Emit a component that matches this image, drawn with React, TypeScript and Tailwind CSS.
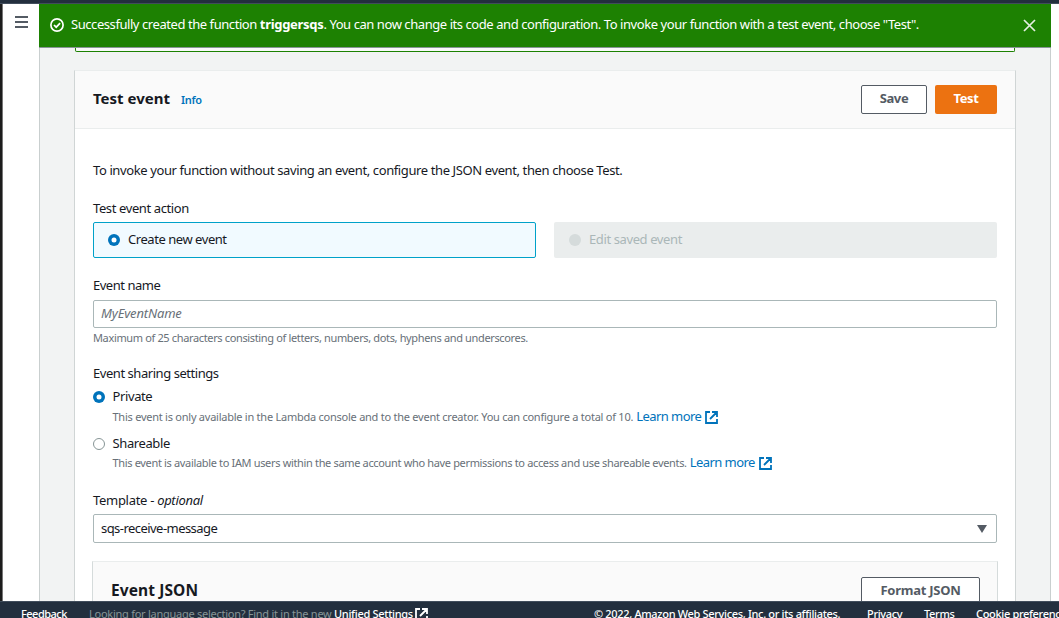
import type { ReactNode } from "react";

function External({ className = "" }: { className?: string }) {
  return (
    <svg viewBox="0 0 13 13" className={`h-[13px] w-[13px] shrink-0 ${className}`} fill="none" stroke="currentColor" strokeWidth="1.8">
      <path d="M5 1H1v11h11V8M7 1h5v5M12 1L5 8" />
    </svg>
  );
}

function Radio({ state }: { state: "on" | "off" | "disabled" }) {
  if (state === "on")
    return (
      <svg viewBox="0 0 12 12" className="h-3 w-3 shrink-0">
        <circle cx="6" cy="6" r="6" fill="#0073bb" />
        <circle cx="6" cy="6" r="2.5" fill="#fff" />
      </svg>
    );
  if (state === "off")
    return <span className="h-3 w-3 shrink-0 rounded-full border border-[#879596] bg-white" />;
  return <span className="h-3 w-3 shrink-0 rounded-full bg-[#d5dbdb]" />;
}

function Label({ children, className = "" }: { children: ReactNode; className?: string }) {
  return <div className={`h-5 leading-5 ${className}`}>{children}</div>;
}

function SharingOption({ name, on, text, track }: { name: string; on: boolean; text: string; track: string }) {
  return (
    <div>
      <div className={`flex h-5 items-center gap-[7.5px] ${on ? "" : "pt-[2px]"}`}>
        <Radio state={on ? "on" : "off"} />
        <span>{name}</span>
      </div>
      <div className="flex h-5 items-center pl-[19.5px] whitespace-nowrap">
        <span className={`text-[11px] text-[#687078] ${track}`}>{text}</span>
        <a className="ml-[3px] flex items-center text-[#0073bb]">
          <span className="tracking-[-0.56px]">Learn more</span>
          <External className="ml-1" />
        </a>
      </div>
    </div>
  );
}

export default function App() {
  return (
    <div className="flex h-[618px] w-[1059px] flex-col overflow-hidden bg-white font-['Noto_Sans',sans-serif] text-[13px] tracking-[-0.39px] whitespace-nowrap text-[#16191f]">
      <div className="h-1 shrink-0 border-b border-[#414d5c] bg-[#232f3e]" />
      <div className="flex h-[597px] shrink-0">
        <div className="w-[3px] shrink-0 border-r border-[#777] bg-[#1c1c1c]" />
        <aside className="flex w-9 shrink-0 justify-center pt-3">
          <svg viewBox="0 0 13 12" className="h-3 w-[13px]" stroke="#545b64" strokeWidth="1.8">
            <path d="M0 1h13M0 6h13M0 11h13" />
          </svg>
        </aside>
        <div className="flex w-[1012px] shrink-0 flex-col">
          <div className="flex h-11 shrink-0 items-center border-b border-[#879596] bg-[#1d8102] pr-[15px] pb-px pl-[11px] text-white">
            <svg viewBox="0 0 14 14" className="h-[14px] w-[14px]" fill="none" stroke="currentColor" strokeWidth="1.7">
              <circle cx="7" cy="7" r="6.1" />
              <path d="M4 7l2.2 2.2L10.1 5.2" />
            </svg>
            <span className="ml-[7px] pb-px tracking-[-0.435px]">
              Successfully created the function <b className="tracking-[-0.3px]">triggersqs</b>. You can now change its code and configuration. To invoke your function with a test event, choose "Test".
            </span>
            <svg viewBox="0 0 13 13" className="ml-auto h-[13px] w-[13px]" stroke="#e5efe2" strokeWidth="1.7">
              <path d="M1 1l11 11M12 1L1 12" />
            </svg>
          </div>
          <main className="h-[553px] overflow-hidden border-x border-[#c9cfcf] bg-[#f2f3f3] pr-[34px] pl-[34px]">
            <div className="ml-px h-1 w-[940px] rounded-b-[2px] border-x border-b border-[#1d8102] bg-[#fafafa]" />
            <section className="mt-[18px] h-[600px] w-[942px] border border-[#d0d5d5] border-t-[#eaeded] bg-white">
              <header className="flex h-[58px] items-center border-b border-[#eaeded] bg-[#fafafa] pr-[18px] pl-[18px]">
                <h2 className="mb-[3px] text-[15px] font-bold tracking-[0px]">Test event</h2>
                <a className="mt-[1px] ml-[11px] text-[11px] font-semibold tracking-[-0.3px] text-[#0073bb]">Info</a>
                <button className="ml-auto h-[29px] w-[66px] rounded-[2px] border border-[#545b64] bg-white pb-px font-bold text-[#545b64]">Save</button>
                <button className="ml-2 h-[29px] w-[62px] rounded-[2px] bg-[#ec7211] pb-px font-bold text-white">Test</button>
              </header>
              <div className="px-[18px] pt-[31px]">
                <Label>To invoke your function without saving an event, configure the JSON event, then choose Test.</Label>
                <Label className="mt-[18px]">Test event action</Label>
                <div className="mt-1 flex gap-[18px]">
                  <div className="flex h-9 w-[443px] items-center gap-2 rounded-[2px] border border-[#00a1c9] bg-[#f1faff] pl-[14px]">
                    <Radio state="on" />
                    <span className="tracking-[-0.45px]">Create new event</span>
                  </div>
                  <div className="flex h-9 w-[443px] items-center gap-2 rounded-[2px] bg-[#eaeded] pl-[15px] text-[#aab7b8]">
                    <Radio state="disabled" />
                    <span>Edit saved event</span>
                  </div>
                </div>
                <Label className="mt-[17px] tracking-[-0.48px]">Event name</Label>
                <input
                  placeholder="MyEventName"
                  className="mt-[5px] block h-7 w-[904px] rounded-[2px] border border-[#aab7b8] px-[7px] pb-[2px] tracking-[-0.17px] placeholder:text-[#687078] placeholder:italic"
                />
                <div className="h-5 text-[11px] leading-5 tracking-[-0.355px] text-[#687078]">
                  Maximum of 25 characters consisting of letters, numbers, dots, hyphens and underscores.
                </div>
                <Label className="mt-[15px] tracking-[-0.45px]">Event sharing settings</Label>
                <div className="mt-1 flex flex-col gap-[6px]">
                  <SharingOption
                    name="Private"
                    on
                    track="tracking-[-0.245px]"
                    text="This event is only available in the Lambda console and to the event creator. You can configure a total of 10."
                  />
                  <SharingOption
                    name="Shareable"
                    on={false}
                    track="tracking-[-0.34px]"
                    text="This event is available to IAM users within the same account who have permissions to access and use shareable events."
                  />
                </div>
                <Label className="mt-[17px] tracking-[-0.3px]">
                  Template - <i>optional</i>
                </Label>
                <div className="mt-1 flex h-[29px] w-[904px] items-center justify-between rounded-[2px] border border-[#aab7b8] pr-[9px] pl-[7px]">
                  <span className="tracking-[-0.55px]">sqs-receive-message</span>
                  <svg viewBox="0 0 10 8" className="h-2 w-[10px]" fill="#545b64">
                    <path d="M0 0h10L5 8z" />
                  </svg>
                </div>
                <div className="mt-[18px] -ml-px flex h-[60px] w-[906px] items-start justify-between border border-[#d5dbdb] border-t-[#eaeded] bg-[#fafafa] pt-[15px] pr-[17px] pl-[18px]">
                  <h3 className="mt-px text-[15.5px] leading-6 font-bold tracking-[0.1px]">Event JSON</h3>
                  <button className="h-[29px] w-[119px] rounded-[2px] border border-[#545b64] bg-white pb-px font-bold tracking-[-0.25px] text-[#545b64]">Format JSON</button>
                </div>
              </div>
            </section>
          </main>
        </div>
      </div>
      <footer className="flex h-[17px] shrink-0 overflow-hidden border-t border-[#414d5c] bg-[#232f3e] pl-[21px] text-[11px] leading-4 font-medium tracking-[-0.33px] text-white">
        <span className="w-[68px] shrink-0 pt-1 tracking-[-0.5px]">Feedback</span>
        <span className="w-[245px] shrink-0 pt-1 font-normal tracking-[-0.26px] text-[#879596]">Looking for language selection? Find it in the new</span>
        <span className="shrink-0 pt-1 tracking-[-0.3px]">Unified Settings</span>
        <External className="mt-[6px] ml-[2px]" />
        <span className="ml-auto w-[273px] shrink-0 pt-1">© 2022, Amazon Web Services, Inc. or its affiliates.</span>
        <span className="w-[57px] shrink-0 pt-1">Privacy</span>
        <span className="w-[52px] shrink-0 pt-1">Terms</span>
        <span className="w-[83px] shrink-0 pt-1">Cookie preferences</span>
      </footer>
    </div>
  );
}
